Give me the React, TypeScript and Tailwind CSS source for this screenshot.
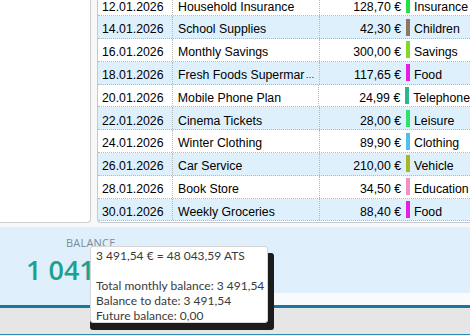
import React from "react";

const rows = [
  { date: "12.01.2026", text: "Household Insurance", amount: "128,70 €", cat: "Insurance", color: "#1fe045" },
  { date: "14.01.2026", text: "School Supplies", amount: "42,30 €", cat: "Children", color: "#8c7664" },
  { date: "16.01.2026", text: "Monthly Savings", amount: "300,00 €", cat: "Savings", color: "#84d828" },
  { date: "18.01.2026", text: "Fresh Foods Supermar", amount: "117,65 €", cat: "Food", color: "#e41ee2", cut: true },
  { date: "20.01.2026", text: "Mobile Phone Plan", amount: "24,99 €", cat: "Telephone", color: "#2fb48e" },
  { date: "22.01.2026", text: "Cinema Tickets", amount: "28,00 €", cat: "Leisure", color: "#2fe06c" },
  { date: "24.01.2026", text: "Winter Clothing", amount: "89,90 €", cat: "Clothing", color: "#52bdf0" },
  { date: "26.01.2026", text: "Car Service", amount: "210,00 €", cat: "Vehicle", color: "#a9b726" },
  { date: "28.01.2026", text: "Book Store", amount: "34,50 €", cat: "Education", color: "#f290c0" },
  { date: "30.01.2026", text: "Weekly Groceries", amount: "88,40 €", cat: "Food", color: "#e41ee2" },
];

export default function App() {
  return (
    <div className="relative w-[470px] h-[335px] overflow-hidden bg-[#f8f8f8] font-['Liberation_Sans',Arial,sans-serif]">
      <div className="flex h-[226px]">
        <div className="w-[91px] h-[223px] bg-white border-r border-b border-[#cdcdcd] rounded-br-[4px]" />
        <div className="ml-[6px] flex-1 h-[223px] bg-white border-l border-b border-[#c8c8c8] rounded-bl-[4px] overflow-hidden">
          <div className="-mt-[6.5px] text-[12.3px] text-black">
            {rows.map((r, i) => (
              <div
                key={i}
                className={`flex h-[22.8px] border-b border-dotted border-[#b8b8b8] ${i % 2 ? "bg-[#def0fc]" : "bg-white"}`}
              >
                <div className="w-[75px] h-full flex items-center pt-[5px] pl-[4px] border-r border-dotted border-[#b8b8b8]">{r.date}</div>
                <div className="w-[147px] h-full flex items-center pt-[5px] pl-[5px] border-r border-dotted border-[#b8b8b8] whitespace-nowrap overflow-hidden">
                  {r.text}
                  {r.cut && <span className="text-[9px] ml-[1px]">…</span>}
                </div>
                <div className="w-[83px] h-full flex items-center pt-[5px] justify-end pr-[2px] whitespace-nowrap">{r.amount}</div>
                <div className="flex items-center h-full whitespace-nowrap">
                  <span className="ml-[3px] w-[4px] h-[17px]" style={{ backgroundColor: r.color }} />
                  <span className="ml-[4px] pt-[5px]">{r.cat}</span>
                </div>
              </div>
            ))}
          </div>
        </div>
      </div>

      <div className="flex h-[78px] mt-[1px]">
        <div className="w-[260px] h-full bg-[#dff0fc] flex flex-col pl-[26px] font-['Open_Sans',sans-serif]">
          <div className="mt-[9px] pl-[40px] text-[11px] leading-[14px] text-[#7d8b98] tracking-[0.2px]">BALANCE</div>
          <div className="mt-[4px] text-[27px] leading-[32px] font-semibold text-[#1f9f8f]">1 041,78 €</div>
        </div>
        <div className="flex-1 flex flex-col">
          <div className="h-[66px] bg-[#dff0fc]" />
          <div className="flex-1 bg-[#f8fafb]" />
        </div>
      </div>
      <div className="h-[3px] bg-[#17789f]" />
      <div className="h-[26px] bg-[#e6e6e6]" />
      <div className="h-[2px] bg-[#2f8ab3]" />

      <div className="absolute left-[90px] top-[246px] w-[178px] h-[77px] bg-white border border-[#d6d6d6] rounded-[3px] shadow-[0_7px_0_#1c1c1c,6px_7px_0_#1c1c1c] px-[5px] pt-[1px] text-[12px] leading-[15px] text-[#3a3a3a] font-['Lato',sans-serif] whitespace-nowrap">
        <div>3 491,54 € = 48 043,59 ATS</div>
        <div>&nbsp;</div>
        <div>Total monthly balance: 3 491,54</div>
        <div>Balance to date: 3 491,54</div>
        <div>Future balance: 0,00</div>
      </div>
    </div>
  );
}
